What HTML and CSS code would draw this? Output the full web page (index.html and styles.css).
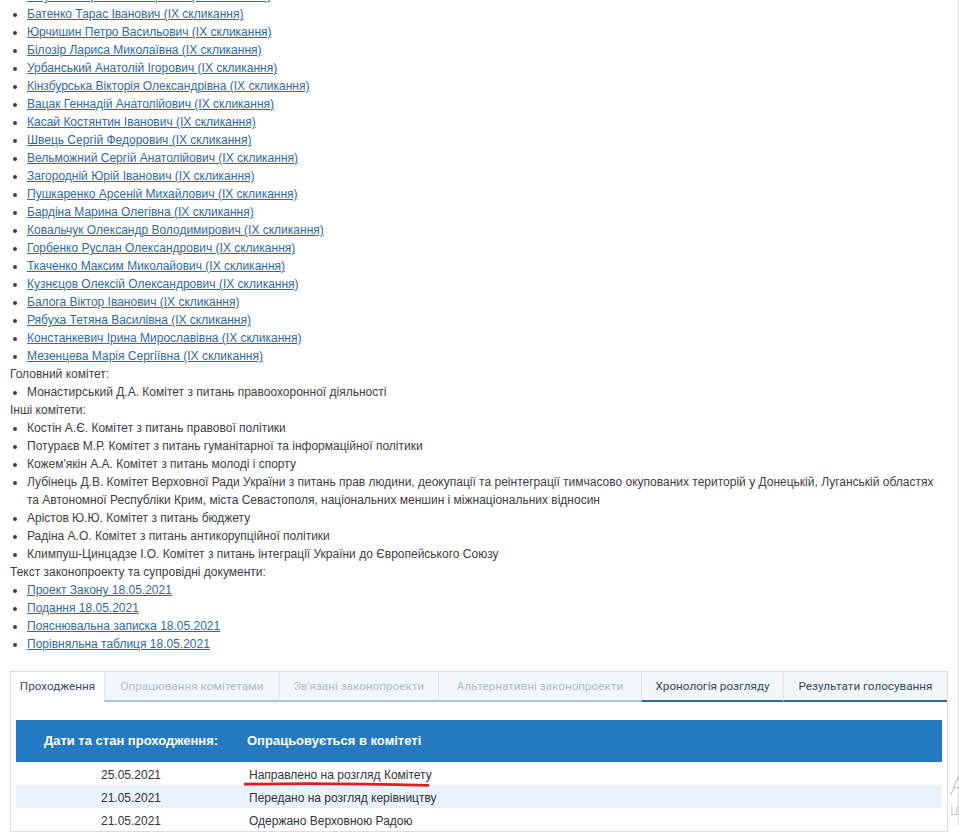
FILE: index.html
```html
<!DOCTYPE html>
<html lang="uk">
<head>
<meta charset="utf-8">
<title>Законопроект</title>
<link rel="stylesheet" href="styles.css">
</head>
<body>
<div class="page">
  <ul class="list">
    <li><a href="#">Іонушас Сергій Казимирович (IX скликання)</a></li>
    <li><a href="#">Батенко Тарас Іванович (IX скликання)</a></li>
    <li><a href="#">Юрчишин Петро Васильович (IX скликання)</a></li>
    <li><a href="#">Білозір Лариса Миколаївна (IX скликання)</a></li>
    <li><a href="#">Урбанський Анатолій Ігорович (IX скликання)</a></li>
    <li><a href="#">Кінзбурська Вікторія Олександрівна (IX скликання)</a></li>
    <li><a href="#">Вацак Геннадій Анатолійович (IX скликання)</a></li>
    <li><a href="#">Касай Костянтин Іванович (IX скликання)</a></li>
    <li><a href="#">Швець Сергій Федорович (IX скликання)</a></li>
    <li><a href="#">Вельможний Сергій Анатолійович (IX скликання)</a></li>
    <li><a href="#">Загородній Юрій Іванович (IX скликання)</a></li>
    <li><a href="#">Пушкаренко Арсеній Михайлович (IX скликання)</a></li>
    <li><a href="#">Бардіна Марина Олегівна (IX скликання)</a></li>
    <li><a href="#">Ковальчук Олександр Володимирович (IX скликання)</a></li>
    <li><a href="#">Горбенко Руслан Олександрович (IX скликання)</a></li>
    <li><a href="#">Ткаченко Максим Миколайович (IX скликання)</a></li>
    <li><a href="#">Кузнєцов Олексій Олександрович (IX скликання)</a></li>
    <li><a href="#">Балога Віктор Іванович (IX скликання)</a></li>
    <li><a href="#">Рябуха Тетяна Василівна (IX скликання)</a></li>
    <li><a href="#">Констанкевич Ірина Мирославівна (IX скликання)</a></li>
    <li><a href="#">Мезенцева Марія Сергіївна (IX скликання)</a></li>
  </ul>
  <div class="label">Головний комітет:</div>
  <ul class="list">
    <li>Монастирський Д.А. Комітет з питань правоохоронної діяльності</li>
  </ul>
  <div class="label">Інші комітети:</div>
  <ul class="list">
    <li>Костін А.Є. Комітет з питань правової політики</li>
    <li>Потураєв М.Р. Комітет з питань гуманітарної та інформаційної політики</li>
    <li>Кожем'якін А.А. Комітет з питань молоді і спорту</li>
    <li>Лубінець Д.В. Комітет Верховної Ради України з питань прав людини, деокупації та реінтеграції тимчасово окупованих територій у Донецькій, Луганській областях та Автономної Республіки Крим, міста Севастополя, національних меншин і міжнаціональних відносин</li>
    <li>Арістов Ю.Ю. Комітет з питань бюджету</li>
    <li>Радіна А.О. Комітет з питань антикорупційної політики</li>
    <li>Климпуш-Цинцадзе І.О. Комітет з питань інтеграції України до Європейського Союзу</li>
  </ul>
  <div class="label">Текст законопроекту та супровідні документи:</div>
  <ul class="list">
    <li><a href="#">Проект Закону 18.05.2021</a></li>
    <li><a href="#">Подання 18.05.2021</a></li>
    <li><a href="#">Пояснювальна записка 18.05.2021</a></li>
    <li><a href="#">Порівняльна таблиця 18.05.2021</a></li>
  </ul>

  <div class="panel">
    <div class="tabs">
      <div class="tab active">Проходження</div>
      <div class="tab disabled">Опрацювання комітетами</div>
      <div class="tab disabled">Зв'язані законопроекти</div>
      <div class="tab disabled">Альтернативні законопроекти</div>
      <div class="tab enabled">Хронологія розгляду</div>
      <div class="tab enabled">Результати голосування</div>
    </div>
    <div class="panel-body">
      <div class="thead">
        <div class="c1">Дати та стан проходження:</div>
        <div class="c2">Опрацьовується в комітеті</div>
      </div>
      <div class="row">
        <div class="c1">25.05.2021</div>
        <div class="c2 marked">Направлено на розгляд Комітету<svg class="mark" width="190" height="8" viewBox="0 0 190 8"><path d="M1 4.2 C 50 3.2, 120 3.6, 184 5.4" fill="none" stroke="#e01b22" stroke-width="2.8" stroke-linecap="round"/></svg></div>
      </div>
      <div class="row alt">
        <div class="c1">21.05.2021</div>
        <div class="c2">Передано на розгляд керівництву</div>
      </div>
      <div class="row">
        <div class="c1">21.05.2021</div>
        <div class="c2">Одержано Верховною Радою</div>
      </div>
    </div>
  </div>
</div>
<div class="watermark">
  <div class="wm-big">Активація Windows</div>
  <div class="wm-small">Щоб активувати Windows, перейдіть до розділу «Параметри».</div>
</div>
</body>
</html>
```

FILE: styles.css
```css
html, body {
  margin: 0;
  padding: 0;
  background: #fff;
  overflow: hidden;
}
body {
  font-family: "Liberation Sans", Arial, sans-serif;
  font-size: 12px;
  line-height: 18px;
  color: #404040;
  height: 839px;
  position: relative;
}
.page {
  width: 938px;
  height: 839px;
  padding: 0 10px;
  margin-top: -13px;
  border-right: 1px solid #dcdcdc;
  box-sizing: content-box;
}
.list {
  margin: 0;
  padding-left: 17px;
  list-style: disc;
}
.list a {
  color: #2f6aa3;
  text-decoration: underline;
}
.label {
  margin: 0;
}
.panel {
  margin-top: 18px;
  border: 1px solid #dddddd;
  width: 936px;
}
.tabs {
  display: grid;
  grid-template-columns: 93px 175px 159px 203px 142px 164px;
  font-family: Roboto, "Liberation Sans", sans-serif;
  font-size: 11.7px;
}
.tab {
  height: 28px;
  line-height: 28px;
  text-align: center;
  background: #f2f7fc;
  border-left: 1px solid #dfe6ee;
  border-bottom: 2px solid #a7c2da;
  white-space: nowrap;
}
.tab.active {
  background: #fff;
  border-left: none;
  border-bottom: 2px solid transparent;
  color: #3a4a5a;
}
.tab.disabled {
  color: #aebccb;
}
.tab.enabled {
  color: #34475a;
  border-bottom-color: #2e6b9c;
}
.panel-body {
  padding: 18px 5px 0 5px;
}
.thead {
  display: flex;
  height: 42px;
  align-items: center;
  background: #2479c0;
  color: #fff;
  font-weight: bold;
  font-size: 13px;
}
.c1 {
  width: 230px;
  text-align: center;
  flex: none;
}
.c2 {
  padding-left: 3px;
  flex: 1;
}
.thead .c2 {
  padding-left: 1px;
}
.row {
  display: flex;
  height: 19px;
  padding-top: 4px;
  line-height: 18px;
  color: #333;
}
.row .c2 {
  padding-left: 3px;
}
.row.alt {
  background: #e7f2fc;
}
.marked {
  position: relative;
}
.mark {
  position: absolute;
  left: -2px;
  top: 14px;
}
.watermark {
  position: absolute;
  left: 950px;
  top: 768px;
  white-space: nowrap;
  color: #c8c8c8;
  font-family: "Open Sans", "Liberation Sans", sans-serif;
  pointer-events: none;
}
.wm-big {
  font-size: 26px;
  line-height: 34px;
  font-weight: 300;
}
.wm-small {
  font-size: 13px;
  line-height: 16px;
}
```
